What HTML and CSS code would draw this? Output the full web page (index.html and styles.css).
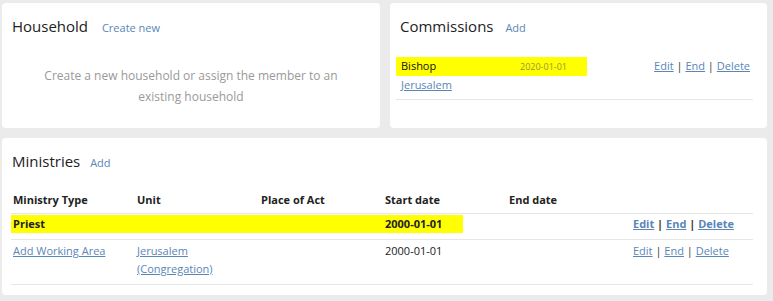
FILE: index.html
```html
<!DOCTYPE html>
<html>
<head>
<meta charset="utf-8">
<link rel="stylesheet" href="styles.css">
</head>
<body>
<div class="page">
  <div class="top">
    <section class="card household">
      <h2 class="title">Household <a class="title-link hh-link" href="#">Create new</a></h2>
      <p class="empty">Create a new household or assign the member to an existing household</p>
    </section>
    <section class="card commissions">
      <h2 class="title">Commissions <a class="title-link" href="#">Add</a></h2>
      <div class="com-row">
        <div class="com-main">
          <div class="com-hl"><span class="com-name">Bishop</span><span class="com-date">2020-01-01</span></div>
          <a class="link" href="#">Jerusalem</a>
        </div>
        <div class="actions"><a class="link" href="#">Edit</a> | <a class="link" href="#">End</a> | <a class="link" href="#">Delete</a></div>
      </div>
    </section>
  </div>
  <section class="card ministries">
    <h2 class="title">Ministries <a class="title-link min-link" href="#">Add</a></h2>
    <div class="table">
      <div class="row head">
        <div>Ministry Type</div><div>Unit</div><div>Place of Act</div><div>Start date</div><div>End date</div><div></div>
      </div>
      <div class="row hl bold">
        <div>Priest</div><div></div><div></div><div>2000-01-01</div><div></div>
        <div class="mactions"><a class="link" href="#">Edit</a> | <a class="link" href="#">End</a> | <a class="link" href="#">Delete</a></div>
      </div>
      <div class="row r2">
        <div><a class="link" href="#">Add Working Area</a></div>
        <div><a class="link" href="#">Jerusalem<br>(Congregation)</a></div>
        <div></div><div>2000-01-01</div><div></div>
        <div class="mactions"><a class="link" href="#">Edit</a> | <a class="link" href="#">End</a> | <a class="link" href="#">Delete</a></div>
      </div>
    </div>
  </section>
</div>
</body>
</html>
```
FILE: styles.css
```css
html, body {
  margin: 0;
  padding: 0;
  background: #ebebeb;
}
body {
  font-family: "Open Sans", "Liberation Sans", sans-serif;
  color: #222;
  font-size: 11px;
}
.page {
  width: 765px;
  padding: 3px 0 0 2px;
  display: flex;
  flex-direction: column;
  gap: 10px;
}
.top {
  display: flex;
  gap: 10px;
}
.card {
  background: #fff;
  border-radius: 4px;
  box-sizing: border-box;
}
.household {
  width: 378px;
  height: 125px;
  padding: 12px 10px 0;
}
.commissions {
  width: 377px;
  height: 125px;
  padding: 12px 14px 0 6px;
}
.commissions .title {
  padding-left: 4px;
}
.title {
  margin: 0;
  font-size: 15px;
  font-weight: normal;
  line-height: 22px;
  color: #222;
}
.title-link {
  font-size: 11px;
  color: #5a86b7;
  text-decoration: none;
  margin-left: 8px;
}
.hh-link {
  margin-left: 10px;
}
.min-link {
  margin-left: 6px;
}
.empty {
  margin: 26px 0 0;
  text-align: center;
  color: #999;
  font-size: 12px;
  line-height: 21px;
  padding: 0 25px;
}
.link {
  color: #5a86b7;
  text-decoration: underline;
}
.com-row {
  margin-top: 18px;
  display: flex;
  justify-content: space-between;
  border-bottom: 1px solid #e6e6e6;
  padding-bottom: 5px;
  line-height: 18px;
}
.com-main .link {
  padding-left: 5px;
}
.com-hl {
  width: 191px;
  box-sizing: border-box;
  background: #ffff00;
  padding-left: 5px;
  display: flex;
  align-items: baseline;
}
.com-name {
  width: 119px;
  color: #111;
}
.com-date {
  font-size: 9px;
  color: #96944a;
}
.actions {
  padding-right: 3px;
  color: #333;
}
.ministries {
  height: 157px;
  padding: 12px 14px 0 9px;
}
.ministries .title {
  padding-left: 1px;
}
.table {
  margin-top: 17px;
}
.row {
  display: grid;
  grid-template-columns: repeat(5, 124px) 1fr;
  line-height: 18px;
  border-bottom: 1px solid #e6e6e6;
}
.row > div {
  padding-left: 2px;
}
.head {
  font-weight: bold;
  padding-bottom: 4px;
}
.hl {
  padding: 1px 0 6px;
  background: linear-gradient(#ffff00, #ffff00) no-repeat 0 1px / 452px 18px;
}
.bold {
  font-weight: bold;
}
.r2 {
  padding: 2px 0 6px;
}
.mactions {
  color: #333;
}
```
